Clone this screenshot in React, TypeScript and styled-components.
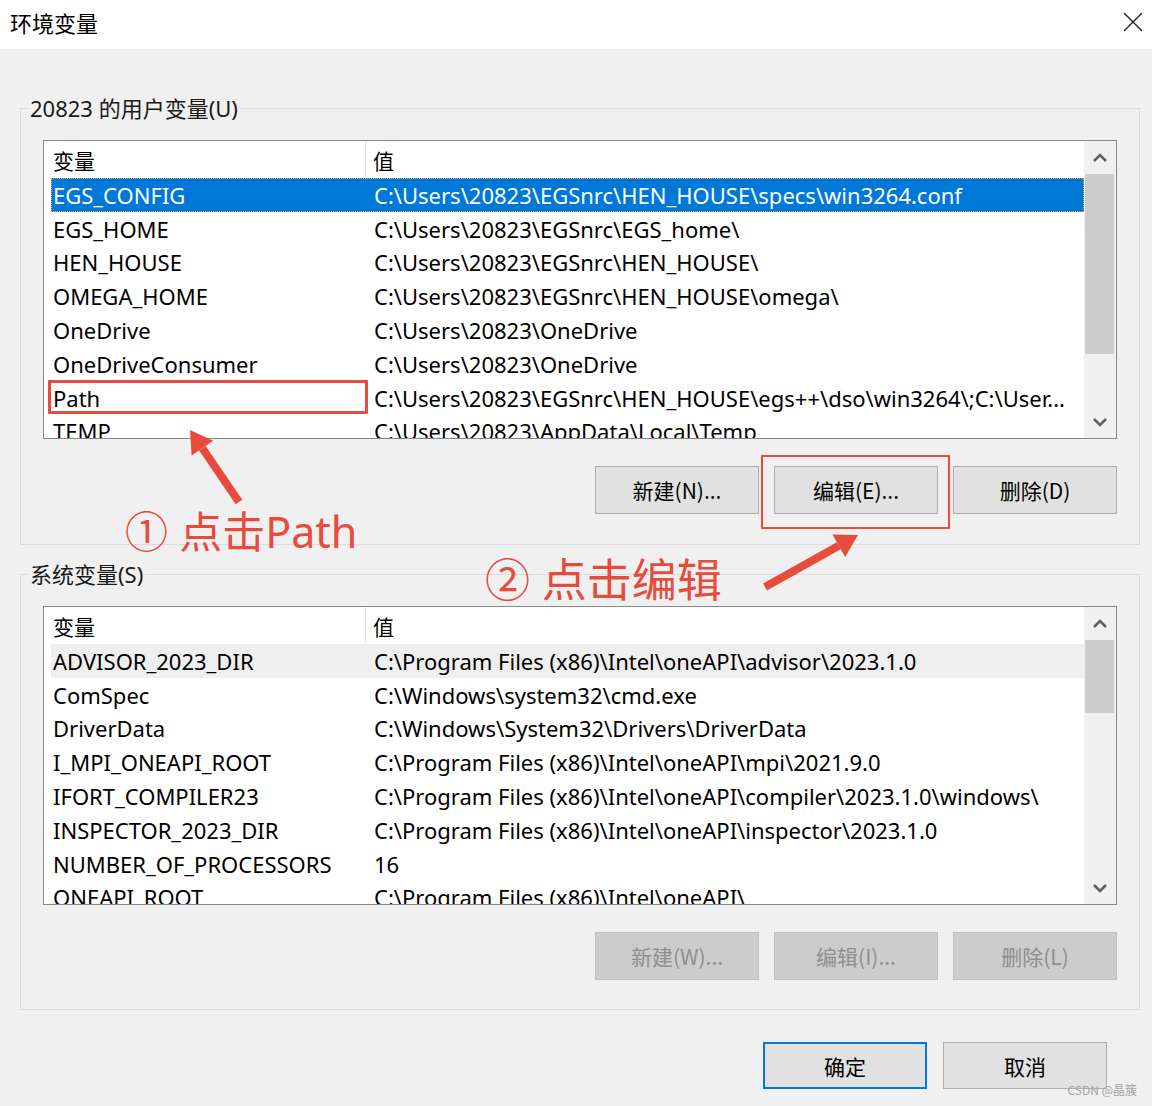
import React from 'react';
import styled, { createGlobalStyle } from 'styled-components';

const UI_FONT = `"Noto Sans", "Noto Sans CJK SC", sans-serif`;
const CJK_FONT = `"Noto Sans CJK SC", "Noto Sans", sans-serif`;
const RED = '#e84b3c';

const GlobalStyle = createGlobalStyle`
  html, body { margin: 0; padding: 0; background: #f0f0f0; }
  body { font-family: ${UI_FONT}; }
  * { box-sizing: border-box; }
`;

const Window = styled.div`
  position: relative;
  width: 1152px;
  height: 1106px;
  background: #f0f0f0;
  overflow: hidden;
  font-family: ${UI_FONT};
  color: #000;
`;

const TitleBar = styled.div`
  height: 49px;
  background: #fff;
  display: flex;
  align-items: center;
  justify-content: space-between;
  padding: 0 8px 5px 10px;
`;

const Title = styled.div`
  font-family: ${CJK_FONT};
  font-size: 22px;
  line-height: 1;
`;

const CloseButton = styled.div`
  width: 22px;
  height: 22px;
  display: flex;
  align-items: center;
  justify-content: center;
`;

const Content = styled.div`
  padding: 0 13px 0 20px;
`;

const Group = styled.fieldset<{ $top: number }>`
  margin: ${(p) => p.$top}px 0 0;
  padding: 0;
  min-width: 0;
  width: 1120px;
  border: 1px solid #dcdcdc;
`;

const Legend = styled.legend`
  margin-left: 7px;
  padding: 0 2px;
  height: 28px;
  font-size: 22px;
  line-height: 28px;
  color: #1a1a1a;
`;

const GroupBody = styled.div<{ $bottom: number }>`
  padding: 18px 22px ${(p) => p.$bottom}px;
`;

const ListView = styled.div`
  display: flex;
  height: 299px;
  border: 1px solid #828790;
  background: #fff;
`;

const ListMain = styled.div`
  flex: 1;
  min-width: 0;
  overflow: hidden;
  display: flex;
  flex-direction: column;
`;

const HeaderRow = styled.div`
  display: flex;
  height: 37px;
  flex-shrink: 0;
  font-size: 21px;
`;

const HeaderNameCell = styled.div`
  width: 322px;
  padding-left: 9px;
  display: flex;
  align-items: center;
  border-right: 1px solid #e5e5e5;
  font-family: ${CJK_FONT};
`;

const HeaderValueCell = styled.div`
  padding-left: 7px;
  display: flex;
  align-items: center;
  font-family: ${CJK_FONT};
`;

const Rows = styled.div`
  padding-left: 7px;
  display: flex;
  flex-direction: column;
`;

type RowState = 'normal' | 'selected' | 'hover';

const Row = styled.div<{ $state: RowState }>`
  display: flex;
  align-items: center;
  height: 33.8px;
  flex-shrink: 0;
  font-size: 22px;
  white-space: nowrap;
  background: ${(p) =>
    p.$state === 'selected' ? '#0078d7' : p.$state === 'hover' ? '#efefef' : 'transparent'};
  color: ${(p) => (p.$state === 'selected' ? '#fff' : '#000')};
  outline: ${(p) => (p.$state === 'selected' ? '1px dotted #f5a047' : 'none')};
  outline-offset: -1px;
`;

const NameCell = styled.div`
  width: 315px;
  padding-left: 2px;
  flex-shrink: 0;
  overflow: hidden;
`;

const ValueCell = styled.div`
  padding-left: 8px;
`;

const ScrollBar = styled.div`
  width: 32px;
  flex-shrink: 0;
  background: #f0f0f0;
  display: flex;
  flex-direction: column;
`;

const ScrollArrow = styled.div`
  height: 33px;
  flex-shrink: 0;
  display: flex;
  align-items: center;
  justify-content: center;
`;

const ScrollTrack = styled.div`
  flex: 1;
`;

const ScrollThumb = styled.div<{ $h: number }>`
  height: ${(p) => p.$h}px;
  margin: 0 2px 0 1px;
  background: #cdcdcd;
  flex-shrink: 0;
`;

const ButtonRow = styled.div`
  display: flex;
  justify-content: flex-end;
  gap: 15px;
  margin-top: 27px;
`;

const Button = styled.div<{ $disabled?: boolean; $default?: boolean }>`
  width: 164px;
  height: 48px;
  display: flex;
  align-items: center;
  justify-content: center;
  font-family: ${CJK_FONT};
  font-size: 21px;
  background: ${(p) => (p.$disabled ? '#cccccc' : '#e1e1e1')};
  border: ${(p) =>
    p.$default ? '2px solid #0078d7' : p.$disabled ? '1px solid #bfbfbf' : '1px solid #adadad'};
  color: ${(p) => (p.$disabled ? '#8f8f8f' : '#000')};
`;

const Footer = styled.div`
  display: flex;
  justify-content: flex-end;
  gap: 16px;
  margin-top: 32px;
  padding-right: 32px;
`;

const FooterButton = styled(Button)`
  height: 47px;
`;

const Watermark = styled.div`
  position: absolute;
  right: 15px;
  bottom: 8px;
  font-family: ${CJK_FONT};
  font-size: 12px;
  color: #a3a3a3;
`;

const AnnotationBox = styled.div<{ $l: number; $t: number; $w: number; $h: number; $b: number }>`
  position: absolute;
  left: ${(p) => p.$l}px;
  top: ${(p) => p.$t}px;
  width: ${(p) => p.$w}px;
  height: ${(p) => p.$h}px;
  border: ${(p) => p.$b}px solid ${RED};
  border-radius: 1px;
  pointer-events: none;
`;

const AnnotationText = styled.div<{ $l: number; $t: number; $size: number }>`
  position: absolute;
  left: ${(p) => p.$l}px;
  top: ${(p) => p.$t}px;
  font-family: ${UI_FONT};
  font-size: ${(p) => p.$size}px;
  line-height: 1;
  color: ${RED};
  white-space: nowrap;
  pointer-events: none;
`;

const ArrowLayer = styled.svg`
  position: absolute;
  left: 0;
  top: 0;
  pointer-events: none;
`;

const Chevron = ({ down }: { down?: boolean }) => (
  <svg width="16" height="10" viewBox="0 0 16 10">
    <polyline
      points={down ? '2,2 8,8 14,2' : '2,8 8,2 14,8'}
      fill="none"
      stroke="#606060"
      strokeWidth="2.6"
    />
  </svg>
);

type Var = { name: string; value: string; state?: RowState };

const userVars: Var[] = [
  { name: 'EGS_CONFIG', value: 'C:\\Users\\20823\\EGSnrc\\HEN_HOUSE\\specs\\win3264.conf', state: 'selected' },
  { name: 'EGS_HOME', value: 'C:\\Users\\20823\\EGSnrc\\EGS_home\\' },
  { name: 'HEN_HOUSE', value: 'C:\\Users\\20823\\EGSnrc\\HEN_HOUSE\\' },
  { name: 'OMEGA_HOME', value: 'C:\\Users\\20823\\EGSnrc\\HEN_HOUSE\\omega\\' },
  { name: 'OneDrive', value: 'C:\\Users\\20823\\OneDrive' },
  { name: 'OneDriveConsumer', value: 'C:\\Users\\20823\\OneDrive' },
  { name: 'Path', value: 'C:\\Users\\20823\\EGSnrc\\HEN_HOUSE\\egs++\\dso\\win3264\\;C:\\User...' },
  { name: 'TEMP', value: 'C:\\Users\\20823\\AppData\\Local\\Temp' },
];

const systemVars: Var[] = [
  { name: 'ADVISOR_2023_DIR', value: 'C:\\Program Files (x86)\\Intel\\oneAPI\\advisor\\2023.1.0', state: 'hover' },
  { name: 'ComSpec', value: 'C:\\Windows\\system32\\cmd.exe' },
  { name: 'DriverData', value: 'C:\\Windows\\System32\\Drivers\\DriverData' },
  { name: 'I_MPI_ONEAPI_ROOT', value: 'C:\\Program Files (x86)\\Intel\\oneAPI\\mpi\\2021.9.0' },
  { name: 'IFORT_COMPILER23', value: 'C:\\Program Files (x86)\\Intel\\oneAPI\\compiler\\2023.1.0\\windows\\' },
  { name: 'INSPECTOR_2023_DIR', value: 'C:\\Program Files (x86)\\Intel\\oneAPI\\inspector\\2023.1.0' },
  { name: 'NUMBER_OF_PROCESSORS', value: '16' },
  { name: 'ONEAPI_ROOT', value: 'C:\\Program Files (x86)\\Intel\\oneAPI\\' },
];

const VarList = ({ vars, thumb }: { vars: Var[]; thumb: number }) => (
  <ListView>
    <ListMain>
      <HeaderRow>
        <HeaderNameCell>变量</HeaderNameCell>
        <HeaderValueCell>值</HeaderValueCell>
      </HeaderRow>
      <Rows>
        {vars.map((v) => (
          <Row key={v.name} $state={v.state ?? 'normal'}>
            <NameCell>{v.name}</NameCell>
            <ValueCell>{v.value}</ValueCell>
          </Row>
        ))}
      </Rows>
    </ListMain>
    <ScrollBar>
      <ScrollArrow>
        <Chevron />
      </ScrollArrow>
      <ScrollThumb $h={thumb} />
      <ScrollTrack />
      <ScrollArrow>
        <Chevron down />
      </ScrollArrow>
    </ScrollBar>
  </ListView>
);

const arrowHead = (tx: number, ty: number, fx: number, fy: number, len = 22, half = 13) => {
  const dx = tx - fx;
  const dy = ty - fy;
  const d = Math.hypot(dx, dy);
  const ux = dx / d;
  const uy = dy / d;
  const bx = tx - ux * len;
  const by = ty - uy * len;
  const nx = -uy;
  const ny = ux;
  return {
    base: [bx, by],
    points: `${tx},${ty} ${bx + nx * half},${by + ny * half} ${bx - nx * half},${by - ny * half}`,
  };
};

const Arrow = ({ fx, fy, tx, ty }: { fx: number; fy: number; tx: number; ty: number }) => {
  const h = arrowHead(tx, ty, fx, fy);
  return (
    <g>
      <line x1={fx} y1={fy} x2={h.base[0]} y2={h.base[1]} stroke={RED} strokeWidth={8} />
      <polygon points={h.points} fill={RED} />
    </g>
  );
};

export default function App() {
  return (
    <Window>
      <GlobalStyle />
      <TitleBar>
        <Title>环境变量</Title>
        <CloseButton>
          <svg width="22" height="22" viewBox="0 0 22 22">
            <path d="M2 2 L20 20 M20 2 L2 20" stroke="#222" strokeWidth="1.4" fill="none" />
          </svg>
        </CloseButton>
      </TitleBar>
      <Content>
        <Group $top={45}>
          <Legend>20823 的用户变量(U)</Legend>
          <GroupBody $bottom={30}>
            <VarList vars={userVars} thumb={180} />
            <ButtonRow>
              <Button>新建(N)...</Button>
              <Button>编辑(E)...</Button>
              <Button>删除(D)</Button>
            </ButtonRow>
          </GroupBody>
        </Group>
        <Group $top={15}>
          <Legend>系统变量(S)</Legend>
          <GroupBody $bottom={29}>
            <VarList vars={systemVars} thumb={73} />
            <ButtonRow>
              <Button $disabled>新建(W)...</Button>
              <Button $disabled>编辑(I)...</Button>
              <Button $disabled>删除(L)</Button>
            </ButtonRow>
          </GroupBody>
        </Group>
        <Footer>
          <FooterButton $default>确定</FooterButton>
          <FooterButton>取消</FooterButton>
        </Footer>
      </Content>

      <AnnotationBox $l={48} $t={380} $w={320} $h={34} $b={3} />
      <AnnotationBox $l={761} $t={455} $w={189} $h={74} $b={2} />
      <ArrowLayer width={1152} height={1106}>
        <Arrow fx={239} fy={502} tx={190} ty={430} />
        <Arrow fx={765} fy={587} tx={858} ty={535} />
      </ArrowLayer>
      <AnnotationText $l={125} $t={510} $size={43}>① 点击Path</AnnotationText>
      <AnnotationText $l={485} $t={557} $size={45}>② 点击编辑</AnnotationText>
      <Watermark>CSDN @晶簇</Watermark>
    </Window>
  );
}
